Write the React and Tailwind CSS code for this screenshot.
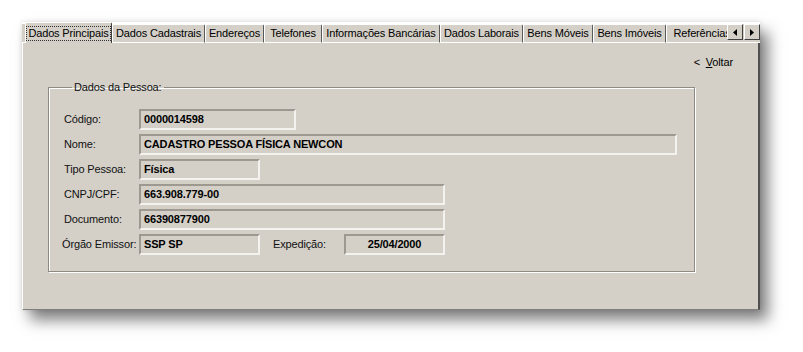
const tabs = [
  { label: 'Dados Principais', w: 'w-[87px]', active: true },
  { label: 'Dados Cadastrais', w: 'w-[93px]' },
  { label: 'Endereços', w: 'w-[59px]' },
  { label: 'Telefones', w: 'w-[58px]' },
  { label: 'Informações Bancárias', w: 'w-[118px]' },
  { label: 'Dados Laborais', w: 'w-[83px]' },
  { label: 'Bens Móveis', w: 'w-[70px]' },
  { label: 'Bens Imóveis', w: 'w-[73px]' },
  { label: 'Referências', w: 'w-[72px]' },
];

const Field = ({ w, value, center }) => (
  <div
    className={`${w} h-[21px] border-2 border-t-[#9d9990] border-l-[#9d9990] border-b-[#f4f2ee] border-r-[#f4f2ee] flex items-center font-bold text-black whitespace-nowrap ${
      center ? 'justify-center' : 'pl-[3px]'
    }`}
  >
    {value}
  </div>
);

const Row = ({ label, children, labelClass = 'w-[75px]' }) => (
  <div className="flex items-center">
    <div className={`${labelClass} text-[#111] whitespace-nowrap`}>{label}</div>
    {children}
  </div>
);

const ScrollButton = ({ dir }) => (
  <div className="w-[16px] h-[16px] bg-[#d4d0c8] border border-t-white border-l-white border-r-[#404040] border-b-[#404040] flex items-center justify-center">
    <svg width="4" height="7" viewBox="0 0 4 7">
      {dir === 'left' ? <path d="M4 0 L0 3.5 L4 7 Z" fill="#000" /> : <path d="M0 0 L4 3.5 L0 7 Z" fill="#000" />}
    </svg>
  </div>
);

const App = () => {
  return (
    <div className="w-[803px] h-[352px] bg-white pt-[22px] pl-[22px] font-['Liberation_Sans',Arial,sans-serif] text-[11px] leading-[13px] tracking-[-0.15px]">
      <div className="w-[738px] h-[288px] flex flex-col bg-[#d4d0c8] shadow-[8px_10px_14px_rgba(0,0,0,0.5),0_0_5px_rgba(0,0,0,0.12)]">
        {/* Tab strip */}
        <div className="h-[21px] flex items-end bg-white">
          <div className="w-[3px] h-[19px] border-b border-b-white bg-[#d4d0c8]" />
          <div className="flex-1 min-w-0 flex items-end overflow-hidden">
            {tabs.map((t) =>
              t.active ? (
                <div
                  key={t.label}
                  className={`${t.w} shrink-0 h-[21px] bg-[#d4d0c8] border-t border-l border-t-white border-l-white border-r border-r-[#404040] rounded-t-[2px] flex items-center justify-center whitespace-nowrap`}
                >
                  <span className="outline outline-1 outline-dotted outline-[#333] px-[1px] text-black">{t.label}</span>
                </div>
              ) : (
                <div
                  key={t.label}
                  className={`${t.w} shrink-0 h-[19px] bg-[#d4d0c8] border-t border-l border-t-white border-l-white border-r border-r-[#5a5a5a] border-b border-b-white rounded-t-[2px] flex items-center justify-center text-black whitespace-nowrap`}
                >
                  {t.label}
                </div>
              )
            )}
          </div>
          <div className="h-[19px] flex items-start gap-[1px] border-b border-b-white bg-[#d4d0c8]">
            <ScrollButton dir="left" />
            <ScrollButton dir="right" />
          </div>
        </div>

        {/* Body */}
        <div className="flex-1 flex flex-col border-l border-l-white border-r-2 border-r-[#505050] border-b border-b-[#808080] pt-[13px]">
          <div className="flex justify-end pr-[25px] text-black">
            <span>
              &lt;&nbsp;&nbsp;<span className="underline">V</span>oltar
            </span>
          </div>

          <fieldset className="ml-[25px] mt-[12px] w-[647px] border border-[#8e8a82] shadow-[inset_1px_1px_0_#fff,1px_1px_0_#fff] pl-[15px] pt-[15px] pb-[16px]">
            <legend className="ml-[8px] px-[2px] text-[#111]">Dados da Pessoa:</legend>
            <div className="flex flex-col gap-[4px]">
              <Row label="Código:">
                <Field w="w-[157px]" value="0000014598" />
              </Row>
              <Row label="Nome:">
                <Field w="w-[538px]" value="CADASTRO PESSOA FÍSICA NEWCON" />
              </Row>
              <Row label="Tipo Pessoa:">
                <Field w="w-[121px]" value="Física" />
              </Row>
              <Row label="CNPJ/CPF:">
                <Field w="w-[306px]" value="663.908.779-00" />
              </Row>
              <Row label="Documento:">
                <Field w="w-[306px]" value="66390877900" />
              </Row>
              <Row label="Órgão Emissor:" labelClass="-ml-[2px] w-[77px]">
                <Field w="w-[121px]" value="SSP SP" />
                <div className="ml-[13px] w-[71px] text-[#111] whitespace-nowrap">Expedição:</div>
                <Field w="w-[101px]" value="25/04/2000" center />
              </Row>
            </div>
          </fieldset>
        </div>
      </div>
    </div>
  );
};

export default App;
